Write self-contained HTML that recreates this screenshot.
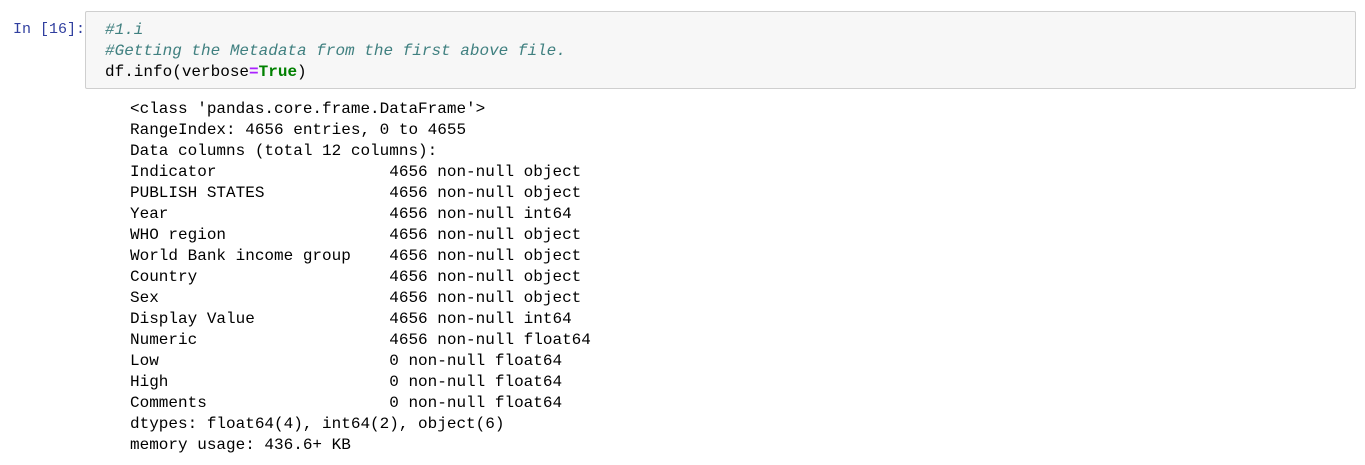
<!DOCTYPE html>
<html><head><style>
body{margin:0;background:#fff;width:1365px;height:465px;overflow:hidden;font-family:"Liberation Mono",monospace;}
.prompt{position:absolute;left:13px;top:19px;color:#303f9f;font-size:15px;line-height:21px;}
.in{position:absolute;left:85px;top:11px;width:1271px;height:78px;background:#f7f7f7;border:1px solid #cfcfcf;border-radius:2px;box-sizing:border-box;}
.in pre{margin:0;position:absolute;left:19px;top:8px;font-size:16px;line-height:21px;color:#000;font-family:"Liberation Mono",monospace;}
.c{color:#408080;font-style:italic;}
.o{color:#aa22ff;font-weight:bold;}
.k{color:#008000;font-weight:bold;}
pre.out{position:absolute;left:130px;top:99px;margin:0;font-size:16px;line-height:21px;color:#000;font-family:"Liberation Mono",monospace;}
</style></head><body>
<div class="prompt">In [16]:</div>
<div class="in"><pre><span class="c">#1.i</span>
<span class="c">#Getting the Metadata from the first above file.</span>
df.info(verbose<span class="o">=</span><span class="k">True</span>)</pre></div>
<pre class="out">&lt;class 'pandas.core.frame.DataFrame'&gt;
RangeIndex: 4656 entries, 0 to 4655
Data columns (total 12 columns):
Indicator                  4656 non-null object
PUBLISH STATES             4656 non-null object
Year                       4656 non-null int64
WHO region                 4656 non-null object
World Bank income group    4656 non-null object
Country                    4656 non-null object
Sex                        4656 non-null object
Display Value              4656 non-null int64
Numeric                    4656 non-null float64
Low                        0 non-null float64
High                       0 non-null float64
Comments                   0 non-null float64
dtypes: float64(4), int64(2), object(6)
memory usage: 436.6+ KB</pre>
</body></html>
